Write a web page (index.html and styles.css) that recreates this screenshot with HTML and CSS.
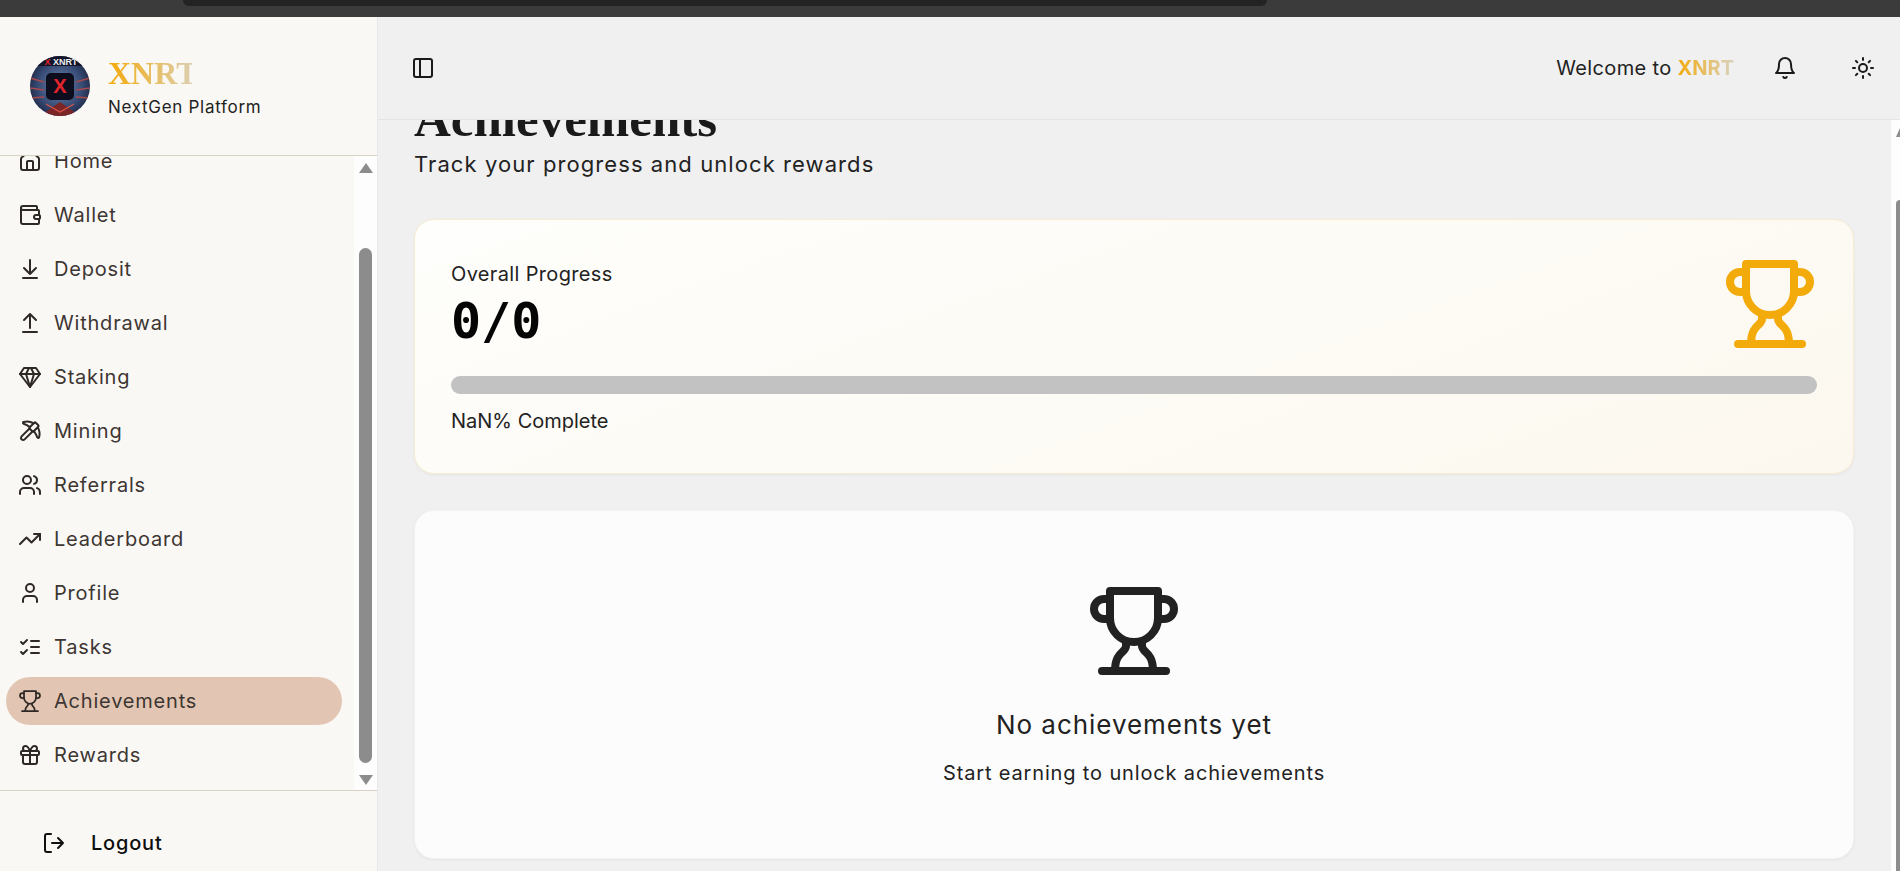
FILE: index.html
```html
<!DOCTYPE html>
<html>
<head>
    <title>XNRT Achievements</title>
    <meta charset="utf-8" />
    <link rel="stylesheet" href="styles.css">
</head>
<body>
    <div class="browser-strip"><div class="browser-tab"></div></div>
    <div class="app">
        <aside class="sidebar">
            <div class="brand">
                <svg class="brand-logo" viewBox="0 0 60 60">
                    <defs>
                        <clipPath id="logoClip"><circle cx="30" cy="30" r="30"/></clipPath>
                        <radialGradient id="logoBg" cx="50%" cy="50%" r="60%">
                            <stop offset="0" stop-color="#6f8db8"/>
                            <stop offset="0.65" stop-color="#33466f"/>
                            <stop offset="1" stop-color="#171b33"/>
                        </radialGradient>
                    </defs>
                    <g clip-path="url(#logoClip)">
                        <rect width="60" height="60" fill="url(#logoBg)"/>
                        <rect width="60" height="10" fill="#15152a"/>
                        <path d="M0 22l14 4M0 32l14 2M0 42l14-1M46 26l14-4M46 34l14-2M46 41l14 1" stroke="#a8494c" stroke-width="1.4"/>
                        <path d="M10 60L30 46L50 60Z" fill="#7c2526"/>
                        <path d="M16 48L30 56L44 48" stroke="#d9534a" stroke-width="1.2" fill="none"/>
                        <rect x="16" y="17" width="28" height="27" rx="5" fill="#0d0d1e"/>
                        <text class="logo-x" x="30" y="37" text-anchor="middle">X</text>
                        <text class="logo-word" x="31" y="9" text-anchor="middle"><tspan fill="#e3242b">X</tspan> XNRT</text>
                    </g>
                </svg>
                <div class="brand-text">
                    <div class="brand-name">XNRT</div>
                    <div class="brand-tag">NextGen Platform</div>
                </div>
            </div>

            <div class="nav-wrap">
                <nav class="nav-list">
                    <a class="nav-item">
                        <svg class="nav-icon" viewBox="0 0 24 24"><path d="M15 21v-8a1 1 0 0 0-1-1h-4a1 1 0 0 0-1 1v8"/><path d="M3 10a2 2 0 0 1 .7-1.5l7-6a2 2 0 0 1 2.6 0l7 6a2 2 0 0 1 .7 1.5v9a2 2 0 0 1-2 2H5a2 2 0 0 1-2-2z"/></svg>
                        Home
                    </a>
                    <a class="nav-item">
                        <svg class="nav-icon" viewBox="0 0 24 24"><path d="M19 7V4a1 1 0 0 0-1-1H5a2 2 0 0 0 0 4h15a1 1 0 0 1 1 1v4h-3a2 2 0 0 0 0 4h3a1 1 0 0 0 1-1v-2a1 1 0 0 0-1-1"/><path d="M3 5v14a2 2 0 0 0 2 2h15a1 1 0 0 0 1-1v-4"/></svg>
                        Wallet
                    </a>
                    <a class="nav-item">
                        <svg class="nav-icon" viewBox="0 0 24 24"><path d="M12 17V3M6 11l6 6 6-6M19 21H5"/></svg>
                        Deposit
                    </a>
                    <a class="nav-item">
                        <svg class="nav-icon" viewBox="0 0 24 24"><path d="M18 9l-6-6-6 6M12 3v14M5 21h14"/></svg>
                        Withdrawal
                    </a>
                    <a class="nav-item">
                        <svg class="nav-icon" viewBox="0 0 24 24"><path d="M6 3h12l4 6-10 13L2 9z"/><path d="M11 3 8 9l4 13 4-13-3-6M2 9h20"/></svg>
                        Staking
                    </a>
                    <a class="nav-item">
                        <svg class="nav-icon" viewBox="0 0 24 24"><path d="M14.531 12.469 6.619 20.38a1 1 0 1 1-3-3l7.912-7.912"/><path d="M15.686 4.314A12.5 12.5 0 0 0 5.461 2.958 1 1 0 0 0 5.58 4.71a22 22 0 0 1 6.318 3.393"/><path d="M17.7 3.7a1 1 0 0 0-1.4 0l-4.6 4.6a1 1 0 0 0 0 1.4l2.6 2.6a1 1 0 0 0 1.4 0l4.6-4.6a1 1 0 0 0 0-1.4z"/><path d="M19.686 8.314a12.501 12.501 0 0 1 1.356 10.225 1 1 0 0 1-1.751-.119 22 22 0 0 0-3.393-6.319"/></svg>
                        Mining
                    </a>
                    <a class="nav-item">
                        <svg class="nav-icon" viewBox="0 0 24 24"><path d="M16 21v-2a4 4 0 0 0-4-4H6a4 4 0 0 0-4 4v2"/><circle cx="9" cy="7" r="4"/><path d="M22 21v-2a4 4 0 0 0-3-3.87M16 3.13a4 4 0 0 1 0 7.75"/></svg>
                        Referrals
                    </a>
                    <a class="nav-item">
                        <svg class="nav-icon" viewBox="0 0 24 24"><path d="M22 7l-8.5 8.5-5-5L2 17"/><path d="M16 7h6v6"/></svg>
                        Leaderboard
                    </a>
                    <a class="nav-item">
                        <svg class="nav-icon" viewBox="0 0 24 24"><path d="M19 21v-2a4 4 0 0 0-4-4H9a4 4 0 0 0-4 4v2"/><circle cx="12" cy="7" r="4"/></svg>
                        Profile
                    </a>
                    <a class="nav-item">
                        <svg class="nav-icon" viewBox="0 0 24 24"><path d="M3 17l2 2 4-4M3 7l2 2 4-4M13 6h8M13 12h8M13 18h8"/></svg>
                        Tasks
                    </a>
                    <a class="nav-item nav-item-active">
                        <svg class="nav-icon nav-icon-trophy" viewBox="0 0 88 88"><use href="#trophyShape"/></svg>
                        Achievements
                    </a>
                    <a class="nav-item">
                        <svg class="nav-icon" viewBox="0 0 24 24"><rect x="3" y="8" width="18" height="4" rx="1"/><path d="M12 8v13M19 12v7a2 2 0 0 1-2 2H7a2 2 0 0 1-2-2v-7"/><path d="M7.5 8a2.5 2.5 0 0 1 0-5C10 3 12 8 12 8s2-5 4.5-5a2.5 2.5 0 0 1 0 5"/></svg>
                        Rewards
                    </a>
                </nav>
                <div class="nav-scrollbar">
                    <div class="arrow-up"></div>
                    <div class="nav-thumb-slot"><div class="nav-thumb"></div></div>
                    <div class="arrow-down"></div>
                </div>
            </div>

            <div class="logout-row">
                <svg class="logout-icon" viewBox="0 0 24 24"><path d="M9 21H5a2 2 0 0 1-2-2V5a2 2 0 0 1 2-2h4M10 12h11M16 7l5 5-5 5"/></svg>
                <span>Logout</span>
            </div>
        </aside>

        <div class="main">
            <header class="topbar">
                <svg class="top-icon" viewBox="0 0 24 24"><rect x="3" y="3" width="18" height="18" rx="2"/><path d="M9 3v18"/></svg>
                <div class="topbar-right">
                    <div class="welcome">Welcome to <span class="welcome-brand">XNRT</span></div>
                    <svg class="top-icon bell-icon" viewBox="0 0 24 24"><path d="M10.3 21a1.94 1.94 0 0 0 3.4 0"/><path d="M6 8a6 6 0 0 1 12 0c0 7 3 9 3 9H3s3-2 3-9"/></svg>
                    <svg class="top-icon" viewBox="0 0 24 24"><circle cx="12" cy="12" r="4"/><path d="M12 2v2M12 20v2M4.9 4.9l1.4 1.4M17.7 17.7l1.4 1.4M2 12h2M20 12h2M6.3 17.7l-1.4 1.4M19.1 4.9l-1.4 1.4"/></svg>
                </div>
            </header>

            <div class="content-wrap">
                <div class="content">
                    <h1 class="page-title">Achievements</h1>
                    <p class="page-sub">Track your progress and unlock rewards</p>

                    <section class="card card-progress">
                        <div class="progress-head">
                            <div>
                                <div class="progress-label">Overall Progress</div>
                                <div class="progress-count">0/0</div>
                            </div>
                            <svg class="trophy trophy-gold" viewBox="0 0 88 88"><use href="#trophyShape"/></svg>
                        </div>
                        <div class="progress-bar"></div>
                        <div class="progress-note">NaN% Complete</div>
                    </section>

                    <section class="card card-empty">
                        <svg class="trophy trophy-dark" viewBox="0 0 88 88"><use href="#trophyShape"/></svg>
                        <div class="empty-title">No achievements yet</div>
                        <div class="empty-text">Start earning to unlock achievements</div>
                    </section>
                </div>
                <div class="page-scrollbar">
                    <div class="arrow-up arrow-small"></div>
                    <div class="page-thumb"></div>
                </div>
            </div>
        </div>
    </div>

    <svg class="svg-defs" width="0" height="0">
        <symbol id="trophyShape" viewBox="0 0 88 88">
            <path d="M20 4H68V31A24 24 0 0 1 20 31Z"/>
            <path d="M20 12H14A10 10 0 0 0 14 32H20"/>
            <path d="M68 12H74A10 10 0 0 1 74 32H68"/>
            <path d="M36 55V59C36 66 25 64 25 84"/>
            <path d="M52 55V59C52 66 63 64 63 84"/>
            <path d="M12 84H76"/>
        </symbol>
    </svg>
</body>
</html>
```

FILE: styles.css
```css
* {
    box-sizing: border-box;
}

html, body {
    height: 100%;
}

body {
    margin: 0;
    display: flex;
    flex-direction: column;
    overflow: hidden;
    background: #f0f0f0;
    color: #1f1f1f;
    font-family: "Inter", "Liberation Sans", sans-serif;
}

.browser-strip {
    height: 17px;
    flex: none;
    background: #3b3b3b;
    padding: 0 633px 0 183px;
}

.browser-tab {
    height: 6px;
    background: #232323;
    border-radius: 0 0 14px 14px;
}

.app {
    flex: 1;
    display: flex;
    min-height: 0;
}

/* sidebar */
.sidebar {
    width: 378px;
    flex: none;
    display: flex;
    flex-direction: column;
    background: #faf8f5;
    border-right: 1px solid #e8e8e8;
}

.brand {
    height: 139px;
    flex: none;
    display: flex;
    align-items: center;
    gap: 18px;
    padding-left: 30px;
    border-bottom: 1px solid #d6d2c6;
}

.brand-logo {
    width: 60px;
    height: 60px;
}

.logo-x {
    font-family: "Liberation Sans", sans-serif;
    font-weight: 700;
    font-size: 20px;
    fill: #e3242b;
}

.logo-word {
    font-family: "Liberation Sans", sans-serif;
    font-weight: 700;
    font-size: 9px;
    fill: #eef0f6;
}

.brand-text {
    padding-top: 2px;
}

.brand-name {
    font-family: "Liberation Serif", serif;
    font-weight: 700;
    font-size: 32px;
    line-height: 36px;
    width: 84px;
    background: linear-gradient(to right, #f3aa0a, #dccfae);
    -webkit-background-clip: text;
    background-clip: text;
    color: transparent;
}

.brand-tag {
    margin-top: 4px;
    font-size: 17px;
    line-height: 24px;
    letter-spacing: 0.7px;
    color: #222;
}

.nav-wrap {
    flex: 1;
    display: flex;
    min-height: 0;
    overflow: hidden;
    border-bottom: 1px solid #d6d2c6;
}

.nav-list {
    flex: 1;
    display: flex;
    flex-direction: column;
    gap: 6px;
    padding: 0 12px 0 6px;
    margin-top: -19px;
}

.nav-item {
    height: 48px;
    flex: none;
    display: flex;
    align-items: center;
    gap: 12px;
    padding-left: 12px;
    border-radius: 24px;
    font-size: 20px;
    letter-spacing: 0.8px;
    color: #3d3632;
}

.nav-item-active {
    background: #e2c6b3;
}

.nav-icon {
    width: 24px;
    height: 24px;
    flex: none;
    fill: none;
    stroke: #2f2926;
    stroke-width: 2;
    stroke-linecap: round;
    stroke-linejoin: round;
}

.nav-icon-trophy {
    width: 22px;
    height: 22px;
    margin: 0 1px;
    stroke-width: 7;
}

.nav-scrollbar {
    width: 23px;
    flex: none;
    display: flex;
    flex-direction: column;
    align-items: center;
    padding: 7px 0 5px;
    background: #fdfdfd;
}

.nav-thumb-slot {
    flex: 1;
    width: 13px;
    padding: 75px 0 12px;
    display: flex;
}

.nav-thumb {
    flex: 1;
    background: #8c8c8c;
    border-radius: 7px;
}

.arrow-up,
.arrow-down {
    width: 0;
    height: 0;
    border-left: 7.5px solid transparent;
    border-right: 7.5px solid transparent;
}

.arrow-up {
    border-bottom: 10px solid #8c8c8c;
}

.arrow-down {
    border-top: 10px solid #8c8c8c;
}

.logout-row {
    height: 80px;
    flex: none;
    display: flex;
    align-items: center;
    gap: 25px;
    padding: 24px 0 0 42px;
    font-size: 20px;
    font-weight: 500;
    letter-spacing: 0.8px;
    color: #0d0d0d;
}

.logout-icon {
    width: 24px;
    height: 24px;
    fill: none;
    stroke: #111;
    stroke-width: 2;
    stroke-linecap: round;
    stroke-linejoin: round;
}

/* main area */
.main {
    flex: 1;
    min-width: 0;
    display: flex;
    flex-direction: column;
}

.topbar {
    height: 103px;
    flex: none;
    display: flex;
    align-items: center;
    justify-content: space-between;
    padding: 0 25px 0 33px;
    border-bottom: 1px solid #e5e5e5;
    background: #f0f0f0;
}

.topbar-right {
    display: flex;
    align-items: center;
}

.top-icon {
    width: 24px;
    height: 24px;
    fill: none;
    stroke: #1a1a1a;
    stroke-width: 2;
    stroke-linecap: round;
    stroke-linejoin: round;
}

.bell-icon {
    margin: 0 54px 0 39px;
}

.welcome {
    font-size: 20px;
    letter-spacing: 0.35px;
    color: #222;
}

.welcome-brand {
    font-weight: 700;
    letter-spacing: 0;
    background: linear-gradient(to right, #f3aa0a, #d9d2c0);
    -webkit-background-clip: text;
    background-clip: text;
    color: transparent;
}

.content-wrap {
    flex: 1;
    min-height: 0;
    display: flex;
    overflow: hidden;
}

.content {
    flex: 1;
    min-width: 0;
    padding: 0 37px 0 36px;
    margin-top: -27px;
}

.page-title {
    margin: 0;
    font-family: "Liberation Serif", serif;
    font-weight: 700;
    font-size: 51px;
    line-height: 52px;
    color: #1a1a1a;
}

.page-sub {
    margin: 5px 0 0;
    font-size: 22px;
    line-height: 28px;
    letter-spacing: 1.08px;
    color: #222;
}

.card {
    border-radius: 20px;
    box-shadow: 0 1px 3px rgba(0, 0, 0, 0.05);
}

.card-progress {
    height: 255px;
    margin-top: 41px;
    padding: 41px 36px 0;
    border: 1px solid #f8ecd0;
    background: linear-gradient(160deg, #fefefc, #fcf8ef);
}

.progress-head {
    display: flex;
    justify-content: space-between;
    align-items: flex-start;
}

.progress-label {
    font-size: 20px;
    line-height: 26px;
    letter-spacing: 0.35px;
    color: #222;
}

.progress-count {
    font-family: "DejaVu Sans Mono", "Liberation Mono", monospace;
    font-weight: 700;
    font-size: 50px;
    line-height: 68px;
    color: #050505;
}

.trophy {
    width: 88px;
    height: 88px;
    flex: none;
    fill: none;
    stroke-width: 8;
    stroke-linecap: round;
    stroke-linejoin: round;
}

.trophy-gold {
    stroke: #f3ab0b;
    margin: -1px 3px 0 0;
}

.trophy-dark {
    stroke: #222;
}

.progress-bar {
    height: 18px;
    margin-top: 21px;
    background: #c2c2c2;
    border-radius: 9px;
}

.progress-note {
    margin-top: 14px;
    font-size: 20px;
    line-height: 26px;
    color: #222;
}

.card-empty {
    height: 349px;
    margin-top: 36px;
    padding-top: 76px;
    display: flex;
    flex-direction: column;
    align-items: center;
    background: #fcfcfc;
    border: 1px solid #f3f3f3;
}

.empty-title {
    margin-top: 34px;
    font-size: 26px;
    line-height: 32px;
    letter-spacing: 0.95px;
    color: #222;
}

.empty-text {
    margin-top: 18px;
    font-size: 20px;
    line-height: 28px;
    letter-spacing: 0.85px;
    color: #222;
}

.page-scrollbar {
    width: 9px;
    flex: none;
    background: #fdfdfd;
    display: flex;
    flex-direction: column;
    align-items: flex-end;
    padding-top: 8px;
}

.arrow-small {
    border-left-width: 4.5px;
    border-right-width: 4.5px;
    border-bottom-width: 9px;
    margin-right: -4px;
}

.page-thumb {
    flex: 1;
    width: 4px;
    margin-top: 63px;
    background: #8c8c8c;
    border-radius: 4px 0 0 0;
}

.svg-defs {
    position: absolute;
}
```
